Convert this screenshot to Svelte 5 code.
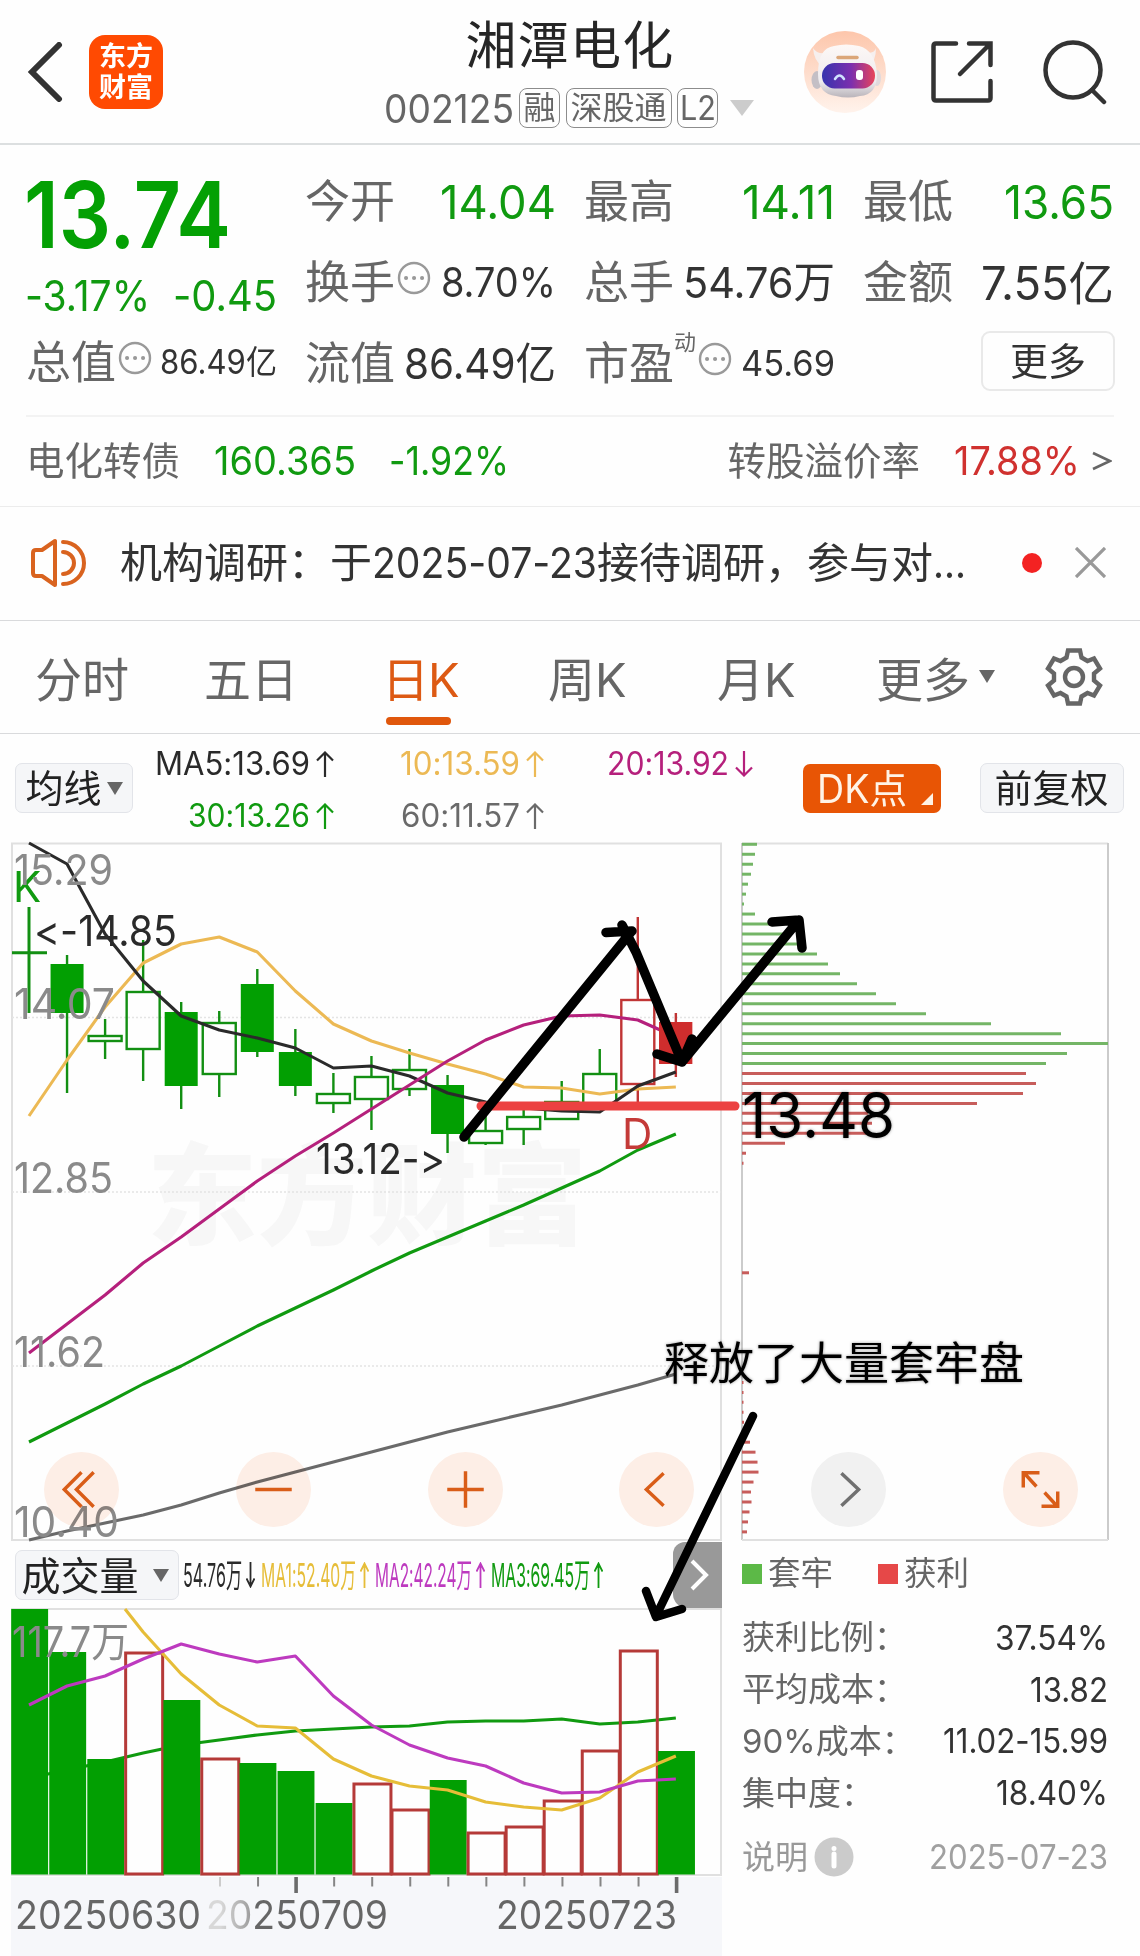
<script lang="ts">
  type Candle = { open: number; close: number; high: number; low: number; kind: string };

  // squeeze or stretch a label horizontally so it fills its slot
  function fit(node: HTMLElement, width: number) {
    const natural = node.getBoundingClientRect().width;
    node.style.transform = `scaleX(${width / natural})`;
    node.style.marginRight = `${width - natural}px`;
  }

  const STEP = 38.05;
  const cx = (i: number) => 29 + i * STEP;

  const c = (open: number, close: number, high: number, low: number, kind: string): Candle => ({ open, close, high, low, kind });
  const candles: Candle[] = [
    c(952, 953, 907, 1013, 'doji'),
    c(964, 1013, 955, 1093, 'down'),
    c(1036, 1041, 1019, 1059, 'hollow'),
    c(992, 1049, 940, 1081, 'hollow'),
    c(1012, 1086, 1002, 1109, 'down'),
    c(1023, 1074, 1011, 1097, 'hollow'),
    c(984, 1052, 969, 1057, 'down'),
    c(1052, 1086, 1029, 1096, 'down'),
    c(1094, 1103, 1073, 1113, 'hollow'),
    c(1077, 1099, 1056, 1130, 'hollow'),
    c(1070, 1089, 1049, 1096, 'hollow'),
    c(1085, 1134, 1075, 1153, 'down'),
    c(1131, 1143, 1115, 1145, 'hollow'),
    c(1117, 1129, 1108, 1145, 'hollow'),
    c(1102, 1119, 1081, 1120, 'hollow'),
    c(1074, 1106, 1049, 1106, 'hollow'),
    c(1000, 1084, 917, 1104, 'rise'),
    c(1022, 1064, 1013, 1077, 'fall'),
  ];

  const toLine = (ys: number[], from = 0) => ys.map((y, i) => `${cx(i + from)},${y}`).join(' ');

  const ma5 = toLine([843, 864, 934, 981, 1016, 1030, 1038, 1048, 1068, 1066, 1076, 1093, 1102, 1108, 1111, 1112, 1086, 1072]);
  const ma10 = toLine([1116, 1060, 1007, 963, 944, 937, 952, 991, 1024, 1041, 1053, 1064, 1074, 1087, 1088, 1094, 1089, 1087]);
  const ma20 = toLine([1353, 1324, 1295, 1263, 1237, 1209, 1181, 1156, 1133, 1109, 1085, 1061, 1040, 1025, 1016, 1015, 1020, 1037]);
  const ma30 = toLine([1442, 1423, 1404, 1384, 1366, 1346, 1326, 1308, 1290, 1271, 1253, 1237, 1221, 1205, 1188, 1171, 1150, 1134]);
  const ma60 = toLine([1540, 1531, 1523, 1515, 1505, 1493, 1482, 1472, 1462, 1452, 1442, 1432, 1423, 1414, 1405, 1395, 1385, 1374]);

  // chip distribution, right edge of each row
  const trapped = [757, 755, 753, 751, 748, 746, 744, 755, 775, 788, 800, 817, 828, 840, 857, 876, 896, 926, 991, 1061, 1108, 1067, 1046];
  const profit: [number, number][] = [
    [23, 1026], [24, 1036], [25, 1023], [26, 977], [27, 868], [28, 872], [29, 866], [30, 785], [31, 746], [32, 743.5],
    [43, 749], [54, 743.5], [55, 743.5], [56, 743.5], [57, 743.5], [58, 744], [59, 745], [60, 750], [61, 755.5], [62, 757.5],
    [63, 758.5], [64, 753.5], [65, 751], [66, 751.5], [67, 749.5], [68, 748], [69, 747],
  ];
  const rowY = (row: number) => 844.3 + row * 9.965;

  const volumes = [1609, 1652, 1759, 1652, 1700, 1758, 1763, 1771, 1803, 1783, 1809, 1780, 1832, 1826, 1800, 1750, 1650, 1751]
    .map((top, i) => ({ top, up: [3, 5, 9, 10, 12, 13, 14, 15, 16].includes(i) }));
  const vol5 = '125,1609 ' + toLine([1632, 1674, 1705, 1726, 1728, 1759, 1776, 1786, 1790, 1802, 1807, 1810, 1798, 1772, 1756], 3);
  const vol10 = toLine([1705, 1686, 1676, 1659, 1644, 1654, 1662, 1656, 1696, 1725, 1745, 1758, 1766, 1783, 1793, 1792, 1781, 1779]);
  const vol20 = toLine([1778, 1770, 1762, 1753, 1745, 1740, 1735, 1731, 1729, 1727, 1726, 1722, 1721, 1721, 1719, 1724, 1722, 1718]);

  const ticks = Array.from({ length: 13 }, (_, i) => ({ x: 220 + i * STEP, big: i === 2 || i === 12, faded: i === 0 }));

  const averages = [
    { text: 'MA5:13.69', w: 155, tone: 'dark', up: true },
    { text: '10:13.59', w: 120, tone: 'amber', up: true },
    { text: '20:13.92', w: 122, tone: 'magenta', up: false },
    { text: '30:13.26', w: 122, tone: 'green', up: true },
    { text: '60:11.57', w: 119, tone: 'grey', up: true },
  ];

  const volumeInfo = [
    { text: '54.76万', w: 59, tone: 'dark', up: false },
    { text: 'MA1:52.40万', w: 95, tone: 'gold', up: true },
    { text: 'MA2:42.24万', w: 97, tone: 'violet', up: true },
    { text: 'MA3:69.45万', w: 99, tone: 'green', up: true },
  ];

  const costs = [
    { label: '获利比例：', value: '37.54%', w: 113 },
    { label: '平均成本：', value: '13.82', w: 78 },
    { label: '90%成本：', value: '11.02-15.99', w: 165 },
    { label: '集中度：', value: '18.40%', w: 112 },
  ];
</script>

{#snippet arrow(up: boolean)}
  <svg class="arrow" class:flip={!up} viewBox="0 0 18 26" preserveAspectRatio="none">
    <path d="M9 1V26M1 9.5L9 1.5L17 9.5" />
  </svg>
{/snippet}

{#snippet more()}
  <svg class="more-dot" viewBox="0 0 34 34">
    <circle cx="17" cy="17" r="15" />
    <path d="M9 17h.1M17 17h.1M25 17h.1" />
  </svg>
{/snippet}

<main class="page">
  <header class="topbar">
    <div class="top-left">
      <svg class="back" viewBox="0 0 36 60"><path d="M32 3L5 30L32 57" /></svg>
      <div class="logo"><span>东方</span><span>财富</span></div>
    </div>
    <div class="title">
      <h1>湘潭电化</h1>
      <div class="code-row">
        <span class="code" use:fit={130}>002125</span>
        <span class="tag">融</span>
        <span class="tag wide">深股通</span>
        <span class="tag"><span use:fit={36}>L2</span></span>
        <i class="caret"></i>
      </div>
    </div>
    <div class="top-right">
      <svg class="robot" viewBox="0 0 82 82">
        <defs>
          <linearGradient id="peach" x1="0" y1="0" x2="0" y2="1">
            <stop offset="0" stop-color="#fdc6ab" />
            <stop offset="1" stop-color="#fff3ec" />
          </linearGradient>
          <linearGradient id="visor">
            <stop offset="0" stop-color="#3634ae" />
            <stop offset="0.55" stop-color="#7c2fae" />
            <stop offset="1" stop-color="#e8445a" />
          </linearGradient>
          <linearGradient id="helmet" x1="0" y1="0" x2="0" y2="1">
            <stop offset="0" stop-color="#fdf8f6" />
            <stop offset="0.7" stop-color="#eeebee" />
            <stop offset="1" stop-color="#b9b4ba" />
          </linearGradient>
        </defs>
        <circle cx="41" cy="41" r="41" fill="url(#peach)" />
        <path d="M9 17Q10 30 18 35L26 21Q14 25 9 17ZM72 17Q72 30 65 34L58 21Q70 24 72 17Z" fill="#f6efee" />
        <ellipse cx="13" cy="49" rx="5.500" ry="9" fill="#c4bfc5" />
        <ellipse cx="73" cy="47" rx="4" ry="8" fill="#e0d9dc" />
        <path d="M14 43Q14 17 30 15Q42 12 55 15Q71 19 73 43Q73 64 56 65Q44 68 32 65Q14 63 14 43Z" fill="url(#helmet)" />
        <path d="M34 26.500h19" stroke="#dba678" stroke-width="3.500" stroke-linecap="round" />
        <rect x="18" y="32" width="53" height="25.500" rx="12.500" fill="url(#visor)" />
        <path d="M31 48Q35.500 41 40 48" fill="none" stroke="#cfe2ff" stroke-width="2.500" stroke-linecap="round" />
        <rect x="52" y="39" width="7" height="10" rx="3" fill="#fff" />
      </svg>
      <svg class="share" viewBox="0 0 64 64">
        <path d="M26 3.500H6Q3.500 3.500 3.500 6V58Q3.500 60.500 6 60.500H58Q60.500 60.500 60.500 58V41M39 3.500H60.500V25M60 4L30 34" />
      </svg>
      <svg class="search" viewBox="0 0 66 66">
        <circle cx="31" cy="31" r="27.500" /><path d="M50 51L62 63" />
      </svg>
    </div>
  </header>

  <section class="quote">
    <div class="col">
      <div class="price-row"><b class="price" use:fit={207}>13.74</b></div>
      <div class="change-row"><span use:fit={125}>-3.17%</span><span use:fit={104}>-0.45</span></div>
      <div class="cell"><label>总值</label>{@render more()}<span class="num s34" use:fit={117}>86.49亿</span></div>
    </div>
    <div class="col">
      <div class="cell"><label>今开</label><span class="num s47 green" use:fit={116}>14.04</span></div>
      <div class="cell"><label>换手</label>{@render more()}<span class="num s41" use:fit={115}>8.70%</span></div>
      <div class="cell"><label>流值</label><span class="num s43" use:fit={152}>86.49亿</span></div>
    </div>
    <div class="col">
      <div class="cell"><label>最高</label><span class="num s47 green" use:fit={93}>14.11</span></div>
      <div class="cell"><label>总手</label><span class="num s43" use:fit={152}>54.76万</span></div>
      <div class="cell"><label>市盈</label><sup>动</sup>{@render more()}<span class="num s35" use:fit={94}>45.69</span></div>
    </div>
    <div class="col">
      <div class="cell"><label>最低</label><span class="num s47 green" use:fit={110}>13.65</span></div>
      <div class="cell"><label>金额</label><span class="num s46" use:fit={133}>7.55亿</span></div>
      <div class="cell end"><button class="more-btn">更多</button></div>
    </div>
  </section>

  <section class="bond">
    <span class="name">电化转债</span>
    <span class="green v1" use:fit={142}>160.365</span>
    <span class="green" use:fit={120}>-1.92%</span>
    <span class="name rate">转股溢价率</span>
    <span class="red" use:fit={126}>17.88%</span>
    <svg class="gt" viewBox="0 0 20 20"><path d="M1 2L18 10L1 18" /></svg>
  </section>

  <section class="notice">
    <svg class="speaker" viewBox="0 0 58 50">
      <path d="M4 15Q4 12 7 12H13L26 3V47L13 38H7Q4 38 4 35Z" />
      <path d="M34 4A21 21 0 0 1 34 46M34 14A11 11 0 0 1 34 36" />
    </svg>
    <p>机构调研：于<span use:fit={225}>2025-07-23</span>接待调研，参与对<span use:fit={33}>...</span></p>
    <i class="dot"></i>
    <svg class="close" viewBox="0 0 32 32"><path d="M1 1L31 31M31 1L1 31" /></svg>
  </section>

  <nav class="tabs">
    <span>分时</span>
    <span>五日</span>
    <span class="active">日K</span>
    <span>周K</span>
    <span>月K</span>
    <span>更多<i class="caret dark"></i></span>
    <svg class="gear" viewBox="-29 -29 58 58">
      <path d="M-6 -26.500H6L7.500 -19.500L13.500 -16L20 -18.500L26 -8.500L20 -3.500V3.500L26 8.500L20 18.500L13.500 16L7.500 19.500L6 26.500H-6L-7.500 19.500L-13.500 16L-20 18.500L-26 8.500L-20 3.500V-3.500L-26 -8.500L-20 -18.500L-13.500 -16L-7.500 -19.500Z" />
      <circle r="9" />
    </svg>
  </nav>

  <section class="ma-bar">
    <button class="pill ma-pill">均线<i class="caret dark"></i></button>
    <div class="averages">
      {#each averages as a}
        <div class="avg {a.tone}"><span use:fit={a.w}>{a.text}</span>{@render arrow(a.up)}</div>
      {/each}
    </div>
    <button class="dk"><span use:fit={90}>DK点</span><i></i></button>
    <button class="pill adj">前复权</button>
  </section>

  <section class="charts">
    <svg class="kline" viewBox="11 842 712 700">
      <rect class="frame" x="12" y="843.500" width="709" height="696.500" />
      <text class="watermark" x="147" y="1236" textLength="440">东方财富</text>
      {#each [1017.5, 1192, 1366] as y}
        <path class="grid" d="M12 {y}H721" />
      {/each}

      {#each candles as k, i}
        <g class={k.kind}>
          {#if k.kind === 'doji'}
            <path d="M{cx(i)} {k.high}V{k.low}M12 {k.open + 0.7}H47" />
          {:else}
            <path d="M{cx(i)} {k.high}V{k.open}M{cx(i)} {k.close}V{k.low}" />
            <rect x={cx(i) - 16.5} y={k.open} width="33" height={k.close - k.open} />
          {/if}
        </g>
      {/each}

      <polyline class="line amber" points={ma10} />
      <polyline class="line dark" points={ma5} />
      <polyline class="line magenta" points={ma20} />
      <polyline class="line green" points={ma30} />
      <polyline class="line grey" points={ma60} />
      <rect class="over" x="659" y="1022" width="33" height="42" />

      <text class="mark k" x="13" y="901.500">K</text>
      <text class="axis" x="14" y="885" textLength="99" lengthAdjust="spacingAndGlyphs">15.29</text>
      <text class="axis" x="14" y="1018.500" textLength="101" lengthAdjust="spacingAndGlyphs">14.07</text>
      <text class="axis" x="14" y="1192.500" textLength="99" lengthAdjust="spacingAndGlyphs">12.85</text>
      <text class="axis" x="14" y="1366.500" textLength="91" lengthAdjust="spacingAndGlyphs">11.62</text>
      <text class="axis" x="14" y="1536.500" textLength="105" lengthAdjust="spacingAndGlyphs">10.40</text>
      <text class="peak" x="34" y="946" textLength="143" lengthAdjust="spacingAndGlyphs">&lt;-14.85</text>
      <text class="peak" x="316" y="1173.500" textLength="129" lengthAdjust="spacingAndGlyphs">13.12-&gt;</text>
      <text class="mark d" x="622" y="1148.500">D</text>
    </svg>

    <svg class="chips" viewBox="741 842 368 700">
      <path class="frame" d="M742 843.500H1108" />
      <path class="frame side" d="M742 843V1540M1108 843V1540" />
      <path class="frame" d="M742 1540H1108" />
      {#each trapped as end, row}
        <path class="trapped" d="M742 {rowY(row)}H{end}" />
      {/each}
      {#each profit as [row, end]}
        <path class="profit" d="M742 {rowY(row)}H{end}" />
      {/each}
    </svg>

    <div class="controls">
      <button><svg viewBox="-37 -37 74 74"><path d="M0 -17L-17 0L0 17M12 -17L-5 0L12 17" /></svg></button>
      <button><svg viewBox="-37 -37 74 74"><path d="M-18 0H18" /></svg></button>
      <button><svg viewBox="-37 -37 74 74"><path d="M-18 0H18M0 -18V18" /></svg></button>
      <button><svg viewBox="-37 -37 74 74"><path d="M7 -16L-10 0L7 16" /></svg></button>
      <button class="neutral"><svg viewBox="-37 -37 74 74"><path d="M-7 -16L10 0L-7 16" /></svg></button>
      <button><svg viewBox="-37 -37 74 74"><path d="M-17 -2V-16.500H-1M-16 -16L-4 -3M17 2V16.500H1M16 16L4 3" /></svg></button>
    </div>
  </section>

  <section class="bottom">
    <div class="volume">
      <div class="vol-head">
        <button class="pill vol-pill">成交量<i class="caret dark"></i></button>
        {#each volumeInfo as v}
          <span class="vol-info {v.tone}"><span use:fit={v.w}>{v.text}</span>{@render arrow(v.up)}</span>
        {/each}
        <div class="fold"><svg viewBox="0 0 20 32"><path d="M2 2L16 16L2 30" /></svg></div>
      </div>
      <svg class="vol-chart" viewBox="11 1608 712 269">
        <rect class="frame" x="12" y="1609" width="709" height="266" />
        <polyline class="line green" points={vol20} />
        {#each volumes as v, i}
          {#if v.up}
            <rect class="bar-up" x={11.5 + i * STEP} y={v.top + 1} width="37" height={1873 - v.top} />
          {:else}
            <rect class="bar-down" x={11.2 + i * STEP} y={v.top} width="36.900" height={1874.500 - v.top} />
          {/if}
        {/each}
        <polyline class="line gold" points={vol5} />
        <polyline class="line violet" points={vol10} />
        <text class="axis" x="12" y="1656.500" textLength="117" lengthAdjust="spacingAndGlyphs">117.7万</text>
      </svg>
      <div class="dates">
        <svg class="ticks" viewBox="11 1877 712 18">
          {#each ticks as t}
            <path class:big={t.big} class:faded={t.faded} d="M{t.x} 1877V{t.big ? 1893 : 1886.500}" />
          {/each}
        </svg>
        <div class="date-row">
          <span use:fit={186}>20250630</span>
          <span class="mid" use:fit={182}>20250709</span>
          <span class="last" use:fit={181}>20250723</span>
        </div>
      </div>
    </div>

    <aside class="costs">
      <div class="legend">
        <i class="sq g"></i><span>套牢</span><i class="sq r"></i><span>获利</span>
      </div>
      {#each costs as row}
        <div class="cost"><span>{row.label}</span><b use:fit={row.w}>{row.value}</b></div>
      {/each}
      <div class="cost note">
        <span>说明</span>
        <svg class="info" viewBox="0 0 40 40"><circle cx="20" cy="20" r="19.500" /><path d="M20 17V29M20 11.500v.1" /></svg>
        <b use:fit={179}>2025-07-23</b>
      </div>
    </aside>
  </section>

  <svg class="drawing" viewBox="0 0 1140 1956">
    <path class="support" d="M481 1106H735" />
    <path class="ink" d="M464 1137L631 932M606 932.500L632 931M622 925L636 952L682 1062M657 1054L682 1062L692 1039M682 1062L799 920M772 922L799 920L802 948" />
    <path class="ink thin" d="M753 1416L656 1616M646 1591L656 1617L682 1609" />
    <text class="handnum" x="742" y="1138" textLength="153" lengthAdjust="spacingAndGlyphs">13.48</text>
    <text class="handtext" x="664" y="1379.500" textLength="360">释放了大量套牢盘</text>
  </svg>
</main>

<style>
:global(body) {
  background: #fefefe;
}

.page {
  position: relative;
  width: 1140px;
  height: 1956px;
  overflow: hidden;
  font-family: Inter, "Noto Sans CJK SC", sans-serif;
  font-feature-settings: "calt" 0;
  line-height: 1;
  color: #333;
  white-space: nowrap;
}

.page * {
  box-sizing: border-box;
}

svg {
  display: block;
  flex: none;
  fill: none;
}

span, label, b {
  transform-origin: left center;
}

button {
  font: inherit;
  font-feature-settings: inherit;
  color: inherit;
  padding: 0;
  border: 0;
  background: none;
}

b {
  font-weight: 400;
}

.green { color: #109a10; }
.red { color: #d0312f; }
.dark { color: #2a2a2a; }
.amber { color: #ecb954; }
.gold { color: #e6bd38; }
.magenta { color: #b5207c; }
.violet { color: #bd3abf; }
.grey { color: #6a6a6a; }

/* header */
.topbar {
  height: 145px;
  display: grid;
  grid-template-columns: 370px 400px 370px;
  border-bottom: 2px solid #dcdfe0;
}

.top-left {
  display: flex;
  align-items: center;
  padding-left: 27px;
}

.back {
  width: 36px;
  height: 60px;
  stroke: #333;
  stroke-width: 6;
  stroke-linecap: round;
}

.logo {
  width: 74px;
  height: 74px;
  margin-left: 26px;
  border-radius: 16px;
  background: #ff4a02;
  color: #fff;
  font-size: 27px;
  font-weight: 700;
  display: flex;
  flex-direction: column;
  align-items: center;
  justify-content: center;
  gap: 4px;
}

.title {
  display: flex;
  flex-direction: column;
  align-items: center;
  padding-top: 20px;
}

h1 {
  margin: 0;
  font-size: 51px;
  font-weight: 400;
  letter-spacing: 1.2px;
  color: #262626;
}

.code-row {
  display: flex;
  align-items: center;
  gap: 5.5px;
  margin-top: 17px;
  margin-right: 3px;
  height: 40px;
  color: #666;
}

.code {
  font-size: 39px;
}

.tag {
  display: flex;
  align-items: center;
  justify-content: center;
  width: 41px;
  height: 40px;
  border: 1.5px solid #8c8c8c;
  border-radius: 8px;
  font-size: 32px;
}

.tag.wide {
  width: 106px;
}

.tag span {
  font-size: 34px;
}

.caret {
  display: inline-block;
  border: 12px solid transparent;
  border-top: 16px solid #ccc;
  border-bottom: 0;
  margin-left: 6px;
}

.caret.dark {
  border-width: 13px 8px 0;
  border-top-color: #666;
  margin-left: 5px;
}

.top-right {
  display: flex;
  align-items: center;
  padding-left: 34px;
}

.robot {
  width: 82px;
  height: 82px;
}

.share {
  width: 64px;
  height: 64px;
  margin-left: 44px;
}

.search {
  width: 66px;
  height: 66px;
  margin-left: 48px;
}

.share, .search {
  stroke: #333;
  stroke-width: 4.5;
  stroke-linecap: round;
}

/* quote */
.quote {
  height: 270px;
  padding: 16px 26px 0;
  display: grid;
  grid-template-columns: repeat(4, 251px);
  column-gap: 28px;
}

.price-row {
  height: 107px;
  display: flex;
  align-items: center;
  margin-left: -2px;
}

.price {
  font-size: 92px;
  font-weight: 600;
  color: #04a004;
}

.change-row {
  height: 54px;
  display: flex;
  align-items: center;
  justify-content: space-between;
  margin-left: -1px;
  font-size: 43px;
  color: #109a10;
}

.cell {
  height: 81px;
  display: flex;
  align-items: center;
}

.cell label {
  font-size: 45px;
  color: #666;
}

.cell .num {
  margin-left: auto;
}

.cell.end {
  justify-content: flex-end;
}

.s34 { font-size: 33.5px; }
.s35 { font-size: 35px; }
.s41 { font-size: 41px; }
.s43 { font-size: 43px; }
.s46 { font-size: 46px; }
.s47 { font-size: 47px; }

.more-dot {
  width: 34px;
  height: 34px;
  margin: 0 0 9px 2px;
  stroke: #999;
  stroke-width: 2.4;
}

.more-dot path {
  stroke-width: 4;
  stroke-linecap: round;
}

sup {
  font-size: 22px;
  color: #666;
  margin: 0 0 44px 0;
}

.more-btn {
  width: 134px;
  height: 60px;
  margin-right: -1px;
  margin-bottom: 6px;
  border: 2px solid #e9e9e9;
  border-radius: 9px;
  font-size: 38px;
}

/* bond */
.bond {
  height: 91px;
  margin: 0 26px;
  border-top: 2px solid #f3f3f3;
  display: flex;
  align-items: center;
  font-size: 40px;
  padding-bottom: 1px;
}

.bond .name {
  font-size: 38.5px;
  color: #666;
}

.bond .v1 {
  margin-left: 34px;
}

.bond .green + .green {
  margin-left: 33px;
}

.bond .rate {
  margin-left: auto;
}

.bond .red {
  margin-left: 34px;
}

.gt {
  width: 20px;
  height: 20px;
  margin-left: 12px;
  margin-right: 2px;
  stroke: #666;
  stroke-width: 2.6;
}

/* notice */
.notice {
  height: 114px;
  border-top: 1.5px solid #ececec;
  display: flex;
  align-items: center;
  padding: 0 34px 2px 29px;
}

.speaker {
  width: 58px;
  height: 50px;
  stroke: #d9631f;
  stroke-width: 4;
  stroke-linecap: round;
  stroke-linejoin: round;
}

.notice p {
  margin: 0 0 0 33px;
  width: 902px;
  font-size: 42px;
}

.notice p span {
  display: inline-block;
}

.dot {
  flex: none;
  width: 20px;
  height: 20px;
  border-radius: 50%;
  background: #f32222;
}

.close {
  width: 31px;
  height: 31px;
  margin-left: auto;
  stroke: #999;
  stroke-width: 3.4;
}

/* tabs */
.tabs {
  height: 114px;
  border-top: 1.5px solid #d9dadc;
  border-bottom: 1.5px solid #d9dadc;
  display: grid;
  grid-template-columns: 169px 181px 163px 169px 159px 205px 60px;
  padding-left: 35px;
  align-items: center;
  font-size: 47px;
  color: #666;
}

.tabs span {
  display: flex;
  align-items: center;
  height: 111px;
  padding-top: 4px;
}

.tabs .active {
  color: #dd5a14;
  position: relative;
  letter-spacing: -1px;
  text-indent: -3px;
}

.tabs .active::after {
  content: '';
  position: absolute;
  left: 1px;
  bottom: 8px;
  width: 65px;
  height: 8px;
  border-radius: 4px;
  background: #e0570c;
}

.tabs .caret {
  margin: 0 0 6px 9px;
}

.gear {
  width: 58px;
  height: 58px;
  margin-left: -36px;
  stroke: #666;
  stroke-width: 4.4;
}

/* moving averages bar */
.ma-bar {
  height: 108px;
  display: flex;
  align-items: center;
  padding-left: 15px;
}

.pill {
  display: flex;
  align-items: center;
  justify-content: center;
  height: 50px;
  border: 1.5px solid #e2e4e9;
  border-radius: 7px;
  background: #f5f6f8;
  color: #222;
  font-size: 38px;
}

.ma-pill {
  width: 118px;
}

.averages {
  width: 620px;
  padding-top: 4px;
  display: grid;
  grid-template-columns: 201px 210px 209px;
  grid-auto-rows: 52.5px;
  justify-items: end;
}

.avg {
  display: flex;
  align-items: center;
  font-size: 32px;
}

.arrow {
  width: 18px;
  height: 26px;
  margin-left: 6px;
  stroke: currentColor;
  stroke-width: 2.2;
}

.arrow path {
  vector-effect: non-scaling-stroke;
}

.flip {
  transform: scaleY(-1);
}

.dk {
  display: flex;
  align-items: center;
  width: 138px;
  height: 49px;
  margin-left: 50px;
  padding-left: 14px;
  border-radius: 7px;
  background: #e85505;
  color: #fff3e6;
  font-size: 39px;
}

.dk i {
  border: 6.5px solid #fff3e6;
  border-top-color: transparent;
  border-left-color: transparent;
  margin: 22px 0 0 14px;
}

.adj {
  width: 144px;
  margin-left: 38.5px;
}

/* candles and chips */
.charts {
  position: relative;
  height: 700px;
  display: flex;
  gap: 18px;
  padding-left: 11px;
}

.kline {
  width: 712px;
  height: 700px;
  overflow: visible;
}

.chips {
  width: 368px;
  height: 700px;
}

.frame {
  stroke: #e0e0e0;
  stroke-width: 2;
}

.frame.side {
  stroke: #cbcbcb;
}

.grid {
  stroke: #e4e4e4;
  stroke-width: 1.4;
  stroke-dasharray: 2 2;
}

.watermark {
  font-size: 110px;
  font-weight: 900;
  fill: #f7f7f7;
}

.doji path, .hollow, .down {
  stroke: #128f12;
  stroke-width: 2.4;
}

.doji path {
  stroke-width: 3;
}

.down rect {
  fill: #029f02;
  stroke: none;
}

.rise, .fall {
  stroke: #c03535;
  stroke-width: 2.4;
}

.fall rect, .over {
  fill: #cf2d2d;
  stroke: none;
}

.line {
  stroke: currentColor;
  stroke-width: 3.1;
  stroke-linejoin: round;
}

.axis {
  font-size: 42px;
  fill: #8a8a8a;
}

.peak {
  font-size: 42px;
  fill: #2a2a2a;
}

.mark {
  font-size: 42px;
}

.mark.k { fill: #109a10; }
.mark.d { fill: #c43a38; }

.trapped {
  stroke: #74b566;
  stroke-width: 3;
}

.profit {
  stroke: #c75d5b;
  stroke-width: 3;
}

.controls {
  position: absolute;
  left: 44px;
  right: 62px;
  top: 610px;
  display: flex;
  justify-content: space-between;
}

.controls button {
  width: 75px;
  height: 75px;
  border-radius: 50%;
  background: #feefe7;
  mix-blend-mode: multiply;
}

.controls svg {
  stroke: #da5d18;
  stroke-width: 3.4;
}

.controls .neutral {
  background: #f2f2f2;
}

.controls .neutral svg {
  stroke: #707070;
}

/* volume */
.bottom {
  display: flex;
  padding-left: 11px;
}

.volume {
  width: 711px;
}

.vol-head {
  height: 66px;
  display: flex;
  align-items: center;
  padding-left: 4px;
}

.vol-pill {
  width: 164px;
  font-size: 39px;
  padding-right: 4px;
}

.vol-pill .caret {
  margin-left: 14px;
}

.vol-info {
  display: flex;
  align-items: center;
  font-size: 33px;
  margin-left: 4px;
}

.vol-info + .vol-info {
  margin-left: 6px;
}

.vol-info .arrow {
  width: 9px;
  margin-left: 4px;
  stroke-width: 1.8;
}

.fold {
  width: 49px;
  height: 66px;
  margin-left: auto;
  border-radius: 12px 0 0 14px;
  background: #999;
  display: flex;
  align-items: center;
  padding-left: 17px;
}

.fold svg {
  width: 20px;
  height: 32px;
  stroke: #fff;
  stroke-width: 4;
}

.vol-chart {
  width: 712px;
  height: 269px;
}

.bar-down {
  fill: #029f02;
}

.bar-up {
  stroke: #b53a38;
  stroke-width: 3;
}

.dates {
  height: 79px;
  background: #f6f7fa;
}

.ticks {
  width: 712px;
  height: 18px;
  stroke: #858585;
  stroke-width: 2;
}

.ticks .big {
  stroke: #6b6b6b;
  stroke-width: 3.6;
}

.ticks .faded {
  stroke: #ccc;
}

.date-row {
  display: flex;
  align-items: center;
  height: 42px;
  padding-left: 4px;
  font-size: 39.5px;
  color: #666;
}

.mid {
  margin-left: 5px;
  color: transparent;
  background: linear-gradient(90deg, #d8d8d8 8%, #a0a0a0 24%, #666 25%);
  background-clip: text;
}

.last {
  margin-left: 108px;
}

/* costs */
.costs {
  width: 366px;
  margin-left: 20px;
}

.legend {
  height: 64px;
  display: flex;
  align-items: center;
  font-size: 32.5px;
  color: #666;
}

.sq {
  width: 20px;
  height: 20px;
  margin-right: 6px;
}

.sq.g { background: #5cb947; }
.sq.r { background: #e64848; margin-left: 45px; }

.legend + .cost {
  margin-top: 6px;
}

.cost {
  height: 51.8px;
  display: flex;
  align-items: center;
  font-size: 33px;
  color: #666;
}

.cost b {
  margin-left: auto;
  font-size: 34px;
  color: #333;
}

.cost.note {
  margin-top: 12px;
  color: #999;
}

.note b {
  color: #a0a0a0;
}

.info {
  width: 40px;
  height: 40px;
  margin-left: 6px;
}

.info circle {
  fill: #cbcbcb;
}

.info path {
  stroke: #fff;
  stroke-width: 5;
  stroke-linecap: round;
}

/* hand-drawn marks */
.drawing {
  position: absolute;
  left: 0;
  top: 0;
  width: 1140px;
  height: 1956px;
  pointer-events: none;
}

.support {
  stroke: #ec4141;
  stroke-width: 9;
  stroke-linecap: round;
}

.ink {
  stroke: #000;
  stroke-width: 9.5;
  stroke-linecap: round;
  stroke-linejoin: round;
}

.ink.thin {
  stroke-width: 8.5;
}

.handnum {
  font-size: 63px;
  font-weight: 400;
  fill: #000;
}

.handtext {
  font-size: 45px;
  fill: #000;
}

.handnum, .handtext {
  filter: drop-shadow(0 0 1.5px #0006);
}
</style>
